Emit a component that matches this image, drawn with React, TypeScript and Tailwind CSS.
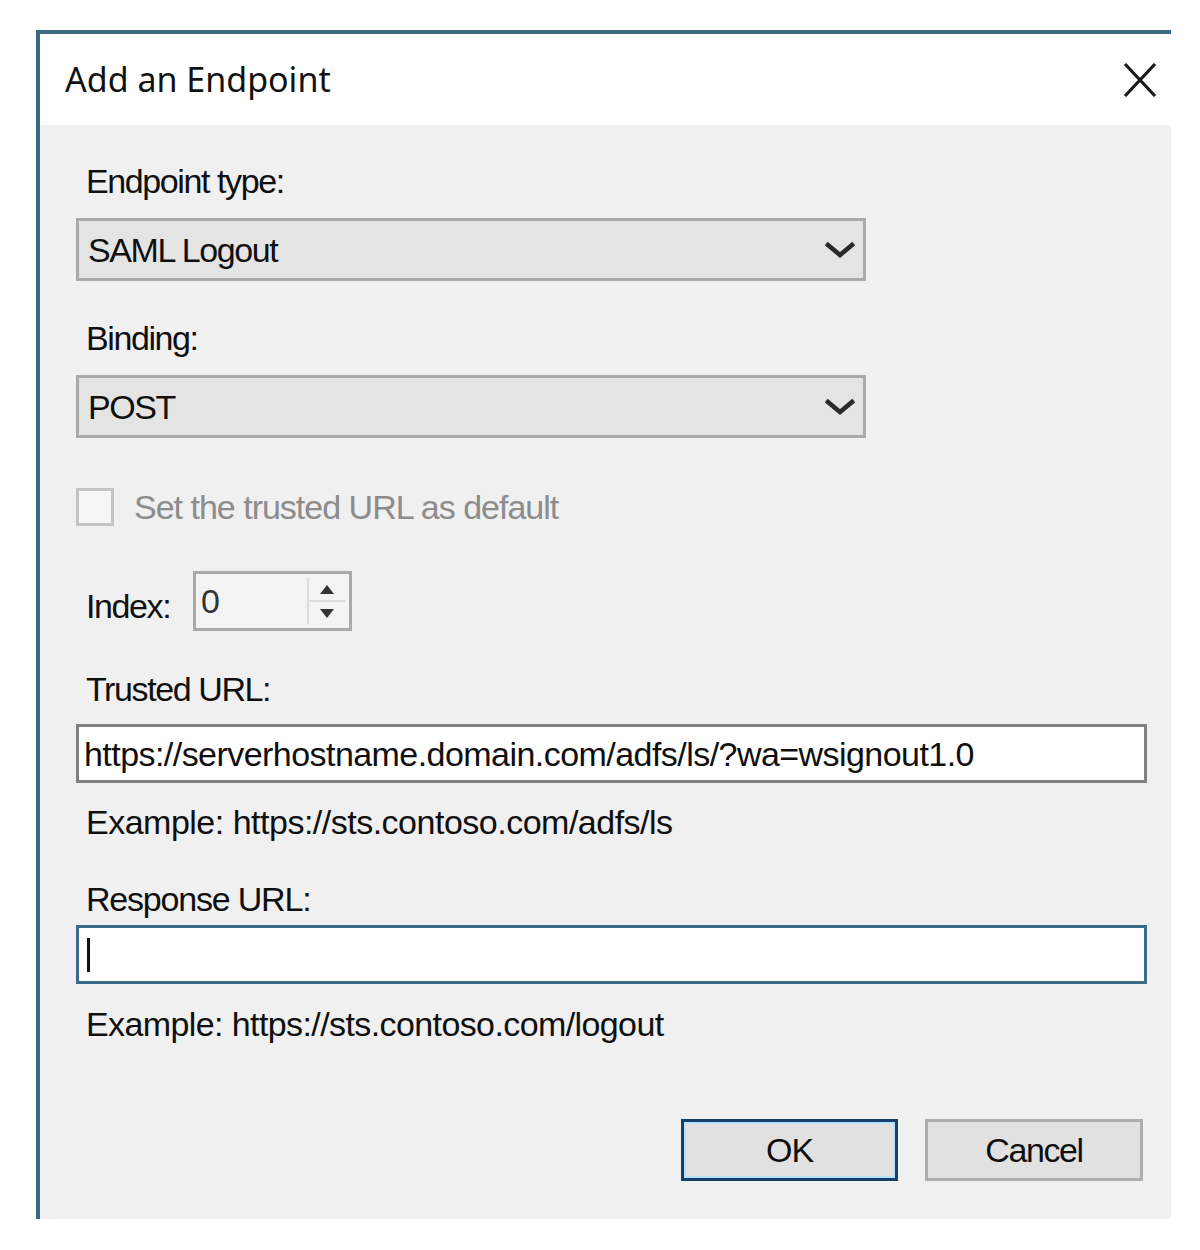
import { ReactNode } from "react";

const sans = "font-['Liberation_Sans',Arial,sans-serif]";

function Label({ children, className = "" }: { children: ReactNode; className?: string }) {
  return (
    <div className={`h-[40px] leading-[40px] text-[34px] text-[#0f0f0f] pl-[10px] whitespace-nowrap ${className}`}>
      {children}
    </div>
  );
}

function Chevron() {
  return (
    <svg width="30" height="18" viewBox="0 0 30 18" className="shrink-0">
      <path d="M3 4 L15 14 L27 4" fill="none" stroke="#2a2a2a" strokeWidth="4.5" strokeLinecap="square" />
    </svg>
  );
}

function Select({ value, className = "" }: { value: string; className?: string }) {
  return (
    <div className={`w-[790px] h-[63px] border-[3px] border-[#a9a9a9] bg-[#e4e4e4] flex items-center justify-between pl-[9px] pr-[8px] ${className}`}>
      <span className="leading-[40px] text-[34px] tracking-[-1.4px] text-[#0f0f0f]">{value}</span>
      <Chevron />
    </div>
  );
}

export default function App() {
  return (
    <div className={`min-h-[1250px] bg-white pt-[30px] pl-[36px] ${sans}`}>
      <div className="w-[1135px] h-[1189px] border-t-[4px] border-l-[4px] border-t-[#3d6b80] border-l-[#3a6a7e] flex flex-col">
        {/* title bar */}
        <div className="h-[91px] bg-white flex items-center justify-between pl-[25px] pr-[14px] shrink-0">
          <span className="font-['Noto_Sans',sans-serif] text-[34px] text-[#111]">Add an Endpoint</span>
          <svg width="34" height="36" viewBox="0 0 34 36">
            <path d="M2 2 L32 34 M32 2 L2 34" stroke="#1a1a1a" strokeWidth="3.2" />
          </svg>
        </div>

        {/* body */}
        <div className="flex-1 bg-[#f0f0f0] pl-[36px] pr-[24px] flex flex-col">
          <Label className="mt-[36px] tracking-[-1.4px]">Endpoint type:</Label>
          <Select value="SAML Logout" className="mt-[17px]" />

          <Label className="mt-[37px] tracking-[-1.4px]">Binding:</Label>
          <Select value="POST" className="mt-[17px]" />

          <div className="mt-[50px] h-[38px] flex items-center">
            <div className="w-[38px] h-[38px] border-[3px] border-[#c4c4c4] bg-[#f6f6f6]" />
            <span className="ml-[20px] leading-[40px] text-[34px] tracking-[-1px] text-[#8c8c8c] whitespace-nowrap">
              Set the trusted URL as default
            </span>
          </div>

          <div className="mt-[45px] h-[60px] flex items-start">
            <Label className="mt-[15px] w-[117px] tracking-[-1.4px]">Index:</Label>
            <div className="w-[159px] h-[60px] border-[3px] border-[#a9a9a9] bg-[#f3f3f3] flex">
              <div className="flex-1 pl-[5px] pt-[7px] leading-[40px] text-[34px] text-[#333]">0</div>
              <div className="w-[38px] mr-[4px] my-[4px] border-l-[2px] border-[#dcdcdc] flex flex-col">
                <div className="flex-1 flex items-center justify-center border-b-[2px] border-[#dcdcdc]">
                  <svg width="14" height="9" viewBox="0 0 14 9"><path d="M7 0 L14 9 L0 9 Z" fill="#333" /></svg>
                </div>
                <div className="flex-1 flex items-center justify-center">
                  <svg width="14" height="9" viewBox="0 0 14 9"><path d="M0 0 L14 0 L7 9 Z" fill="#333" /></svg>
                </div>
              </div>
            </div>
          </div>

          <Label className="mt-[38px] tracking-[-1.4px]">Trusted URL:</Label>
          <div className="mt-[15px] w-[1071px] h-[59px] border-[3px] border-[#808080] bg-white flex items-center pl-[5px]">
            <span className="leading-[40px] text-[34px] tracking-[-0.55px] text-[#0f0f0f] whitespace-nowrap">
              https://serverhostname.domain.com/adfs/ls/?wa=wsignout1.0
            </span>
          </div>
          <Label className="mt-[19px] tracking-[-0.5px]">Example: https://sts.contoso.com/adfs/ls</Label>

          <Label className="mt-[37px] tracking-[-1.2px]">Response URL:</Label>
          <div className="mt-[6px] w-[1071px] h-[59px] border-[3px] border-[#3b6d8a] bg-white flex items-center pl-[8px]">
            <div className="w-[3px] h-[34px] bg-[#111]" />
          </div>
          <Label className="mt-[20px] tracking-[-0.6px]">Example: https://sts.contoso.com/logout</Label>

          <div className="mt-[75px] flex justify-end gap-[27px] pr-[4px]">
            <button className="w-[217px] h-[62px] border-[3px] border-[#123f6b] bg-[#e1e1e1] shadow-[inset_0_0_0_2px_#b9e1ff] flex items-center justify-center text-[34px] tracking-[-1px] text-[#0f0f0f]">
              OK
            </button>
            <button className="w-[218px] h-[62px] border-[3px] border-[#adadad] bg-[#e1e1e1] flex items-center justify-center text-[34px] tracking-[-1.4px] text-[#0f0f0f]">
              Cancel
            </button>
          </div>
        </div>
      </div>
    </div>
  );
}
